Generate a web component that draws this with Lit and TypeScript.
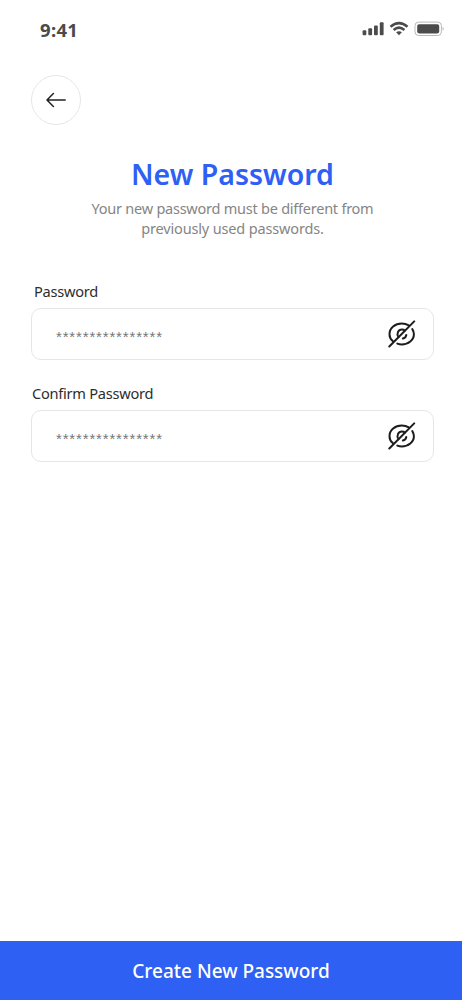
import { LitElement, html, css, svg } from "lit";
import { customElement, property } from "lit/decorators.js";

@customElement("status-bar")
class StatusBar extends LitElement {
  static styles = css`
    :host {
      display: flex;
      justify-content: space-between;
      align-items: flex-start;
      height: 75px;
      box-sizing: border-box;
      padding: 17px 18px 0 40px;
      color: #4b4b4b;
    }
    .time {
      font-size: 18.5px;
      font-weight: 700;
      line-height: 26px;
      letter-spacing: 0.3px;
    }
    .signals {
      display: block;
      margin-top: 3px;
    }
  `;
  render() {
    return html`
      <span class="time">9:41</span>
      <svg class="signals" width="83" height="18" viewBox="361 20 83 18">
        <g fill="#4b4b4b">
          <rect x="362.6" y="30.3" width="3.7" height="4.9" rx="1" />
          <rect x="368.3" y="28.2" width="3.8" height="7" rx="1" />
          <rect x="374" y="25.4" width="3.8" height="9.8" rx="1" />
          <rect x="379.8" y="22.2" width="3.8" height="13" rx="1" />
          <rect x="417.2" y="24.2" width="22" height="9.2" rx="1.8" />
          <path d="M399 35.2L396.1 32.3Q399 30 401.9 32.3Z" />
        </g>
        <g fill="none" stroke="#4b4b4b" stroke-width="2.5">
          <path d="M390.5 26.7Q399 19.5 407.5 26.7" />
          <path d="M393.6 30Q399 25.2 404.4 30" />
        </g>
        <rect x="415" y="22.1" width="26.4" height="13.4" rx="3.6" fill="none" stroke="#b8b8b8" />
        <path d="M442.6 26.8Q445 28.8 442.6 30.8Z" fill="#b8b8b8" />
      </svg>
    `;
  }
}

@customElement("password-field")
class PasswordField extends LitElement {
  @property() label = "";
  @property() value = "";
  static styles = css`
    :host {
      display: block;
      height: 102px;
    }
    .label {
      display: block;
      height: 32px;
      line-height: 30px;
      font-size: 14.6px;
      color: #2d2d2d;
      padding-left: var(--label-inset, 1px);
      letter-spacing: -0.26px;
      white-space: nowrap;
    }
    .box {
      display: flex;
      align-items: center;
      justify-content: space-between;
      box-sizing: border-box;
      height: 52px;
      border: 1.4px solid #e6e6e6;
      border-radius: 10px;
      padding: 0 17px 0 24px;
    }
    .value {
      font-family: "Liberation Sans", sans-serif;
      font-size: 15px;
      line-height: 20px;
      letter-spacing: 0.84px;
      color: #777;
      padding-top: 6px;
    }
    .eye {
      display: block;
    }
  `;
  render() {
    return html`
      <span class="label">${this.label}</span>
      <div class="box">
        <span class="value">${this.value}</span>
        <svg class="eye" width="28" height="28" viewBox="0 0 28 28" fill="none" stroke="#1d1d1d" stroke-width="2" stroke-linecap="round">
          ${svg`
            <path d="M1.3 26.5L26.2 1.4" />
            <path d="M5 21.3C2.8 19.5 1.5 17 1.5 14.2C1.5 7.9 7.1 3.5 13.8 3.5C16.4 3.5 18.8 4.2 20.8 5.4" />
            <path d="M24.3 9.1C25.3 10.6 25.9 12.3 25.9 14.2C25.9 20 20.3 24.4 13.8 24.4C12.2 24.4 10.7 24.1 9.3 23.6" />
            <path d="M10.5 17.1C8.2 14 10.1 9.4 14 9.4C15.1 9.4 16.1 9.8 16.9 10.5" />
            <path d="M18.3 15C17.9 16.8 16.7 18.2 14.9 18.5" />
          `}
        </svg>
      </div>
    `;
  }
}

@customElement("app-root")
class AppRoot extends LitElement {
  static styles = css`
    :host {
      display: flex;
      flex-direction: column;
      height: 1000px;
      background: #fff;
      font-family: "Noto Sans", "Open Sans", sans-serif;
    }
    .back {
      display: flex;
      align-items: center;
      justify-content: center;
      box-sizing: border-box;
      width: 50px;
      height: 50px;
      margin-left: 31px;
      padding: 0;
      border: 1.4px solid #e6e6e6;
      border-radius: 50%;
      background: #fff;
    }
    .heading {
      height: 151px;
      padding: 29px 0 0 3px;
      box-sizing: border-box;
      text-align: center;
    }
    .title {
      margin: 0;
      font-size: 28.5px;
      line-height: 40px;
      font-weight: 600;
      color: #2d60f3;
    }
    .subtitle {
      margin: 4px 0 0;
      font-size: 14.5px;
      line-height: 20px;
      letter-spacing: -0.24px;
      color: #858585;
    }
    .line {
      display: block;
    }
    .line + .line {
      letter-spacing: -0.15px;
    }
    .fields {
      flex: 1;
      padding: 0 28px 0 31px;
    }
    .first {
      --label-inset: 3px;
    }
    .submit {
      height: 59px;
      border: 0;
      padding: 0;
      background: #2d60f3;
      color: #fff;
      font-family: inherit;
      font-size: 19px;
      font-weight: 500;
    }
  `;
  render() {
    return html`
      <status-bar></status-bar>
      <button class="back" aria-label="Back">
        <svg width="20" height="16" viewBox="0 0 20 16" fill="none" stroke="#222" stroke-width="1.5" stroke-linecap="round" stroke-linejoin="round">
          <path d="M19.2 8H1M7.4 1.5L1 8L7.4 14.5" />
        </svg>
      </button>
      <div class="heading">
        <h1 class="title">New Password</h1>
        <p class="subtitle">
          <span class="line">Your new password must be different from</span>
          <span class="line">previously used passwords.</span>
        </p>
      </div>
      <div class="fields">
        <password-field class="first" label="Password" value="****************"></password-field>
        <password-field label="Confirm Password" value="****************"></password-field>
      </div>
      <button class="submit">Create New Password</button>
    `;
  }
}
